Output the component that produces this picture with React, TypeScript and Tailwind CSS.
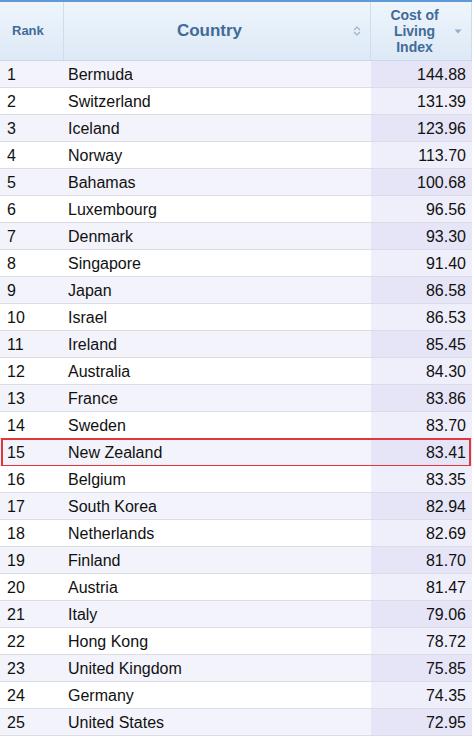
import React from "react";

const data: [string, string][] = [
  ["Bermuda", "144.88"],
  ["Switzerland", "131.39"],
  ["Iceland", "123.96"],
  ["Norway", "113.70"],
  ["Bahamas", "100.68"],
  ["Luxembourg", "96.56"],
  ["Denmark", "93.30"],
  ["Singapore", "91.40"],
  ["Japan", "86.58"],
  ["Israel", "86.53"],
  ["Ireland", "85.45"],
  ["Australia", "84.30"],
  ["France", "83.86"],
  ["Sweden", "83.70"],
  ["New Zealand", "83.41"],
  ["Belgium", "83.35"],
  ["South Korea", "82.94"],
  ["Netherlands", "82.69"],
  ["Finland", "81.70"],
  ["Austria", "81.47"],
  ["Italy", "79.06"],
  ["Hong Kong", "78.72"],
  ["United Kingdom", "75.85"],
  ["Germany", "74.35"],
  ["United States", "72.95"],
];

export default function App() {
  return (
    <div className="w-[474px] h-[740px] bg-white" style={{ fontFamily: '"Liberation Sans", Arial, sans-serif' }}>
      <div className="w-[472px] border-t-2 border-[#5d9ad6]">
        <div className="flex h-[59px] border-b border-[#c8d8ea] bg-gradient-to-b from-[#eef5fc] to-[#dde9f6] text-[#3f6b98] font-bold">
          <div className="w-[64px] border-r border-[#cdddee] flex items-center pl-[12px] text-[13px]">Rank</div>
          <div className="w-[307px] border-r border-[#cdddee] flex items-center">
            <span className="flex-1 text-center text-[17px] pl-[2px]">Country</span>
            <svg width="8" height="10" viewBox="0 0 8 10" className="mr-[9px]">
              <path d="M1 4 L4 1 L7 4" fill="none" stroke="#9ab0c8" strokeWidth="1.1" />
              <path d="M1 6 L4 9 L7 6" fill="none" stroke="#9ab0c8" strokeWidth="1.1" />
            </svg>
          </div>
          <div className="w-[101px] border-r border-[#cdddee] flex items-center">
            <span className="flex-1 text-center text-[14px] leading-[16px] pl-[4px]">Cost of<br />Living<br />Index</span>
            <svg width="8" height="5" viewBox="0 0 8 5" className="mr-[9px]">
              <path d="M0.5 0.5 L7.5 0.5 L4 4.5 Z" fill="#96aecb" />
            </svg>
          </div>
        </div>
        {data.map(([c, v], i) => {
          const odd = i % 2 === 0;
          const hl = i === 14;
          return (
            <div
              key={c}
              className={`relative flex h-[27px] border-b border-[#dcdce4] text-[16px] text-[#111] ${odd ? "bg-[#f3f3fb]" : "bg-white"}`}
            >
              <div className="w-[64px] pl-[7px] pt-[2px] flex items-center">{i + 1}</div>
              <div className="w-[307px] pl-[4px] pt-[2px] flex items-center">{c}</div>
              <div className={`w-[101px] pr-[6px] pt-[2px] flex items-center justify-end ${odd ? "bg-[#e5e5f7]" : "bg-[#efeffb]"}`}>{v}</div>
              {hl && (
                <div className="absolute left-[1px] top-[-1px] w-[470px] h-[29px] border-2 border-[#e3363c] pointer-events-none" />
              )}
            </div>
          );
        })}
      </div>
    </div>
  );
}
